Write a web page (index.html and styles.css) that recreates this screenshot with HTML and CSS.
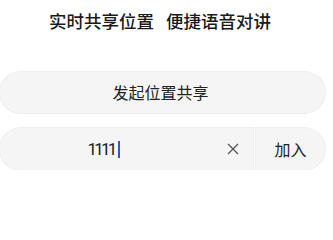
FILE: index.html
```html
<!DOCTYPE html>
<html lang="zh">
<head>
<meta charset="utf-8">
<link rel="stylesheet" href="styles.css">
</head>
<body>
<div class="page">
  <div class="title"><span>实时共享位置</span><span class="second">便捷语音对讲</span></div>
  <div class="primary">发起位置共享</div>
  <div class="join-row">
    <div class="input">
      <div class="value"><span class="digits">1111</span><span class="caret"></span></div>
      <svg class="clear" width="12" height="12" viewBox="0 0 12 12"><path d="M1 1 L11 11 M11 1 L1 11" stroke="#555" stroke-width="1.3" fill="none"/></svg>
    </div>
    <div class="join">加入</div>
  </div>
</div>
</body>
</html>
```

FILE: styles.css
```css
html, body {
  margin: 0;
  padding: 0;
  background: #ffffff;
}
.page {
  width: 325px;
  font-family: "Noto Sans CJK SC", "Noto Sans", sans-serif;
  color: #222;
}
.title {
  padding-top: 9px;
  height: 24px;
  line-height: 24px;
  font-size: 17.5px;
  font-weight: 500;
  text-align: center;
  padding-right: 5px;
  color: #1a1a1a;
}
.title .second {
  margin-left: 12px;
}
.primary {
  margin-top: 39px;
  height: 41px;
  line-height: 41px;
  border-radius: 21px;
  background: #f5f5f5;
  box-shadow: 0 0 0 1px #eeeeee;
  text-align: center;
  font-size: 16px;
  padding-right: 4px;
  color: #222;
}
.join-row {
  margin-top: 15px;
  display: flex;
  gap: 3px;
  height: 42px;
}
.input {
  width: 253px;
  display: flex;
  align-items: center;
  background: #f5f5f5;
  border-radius: 21px 0 0 21px;
  box-shadow: 0 0 0 1px #eeeeee;
  padding-right: 14px;
  box-sizing: border-box;
}
.value {
  flex: 1;
  padding-right: 20px;
  display: flex;
  justify-content: center;
  align-items: center;
}
.digits {
  font-family: Roboto, "Noto Sans", sans-serif;
  font-size: 17px;
  letter-spacing: -2.8px;
  color: #222;
}
.caret {
  display: inline-block;
  width: 2px;
  height: 17px;
  background: #3e55b3;
  margin-left: 3px;
}
.clear {
  display: block;
}
.join {
  flex: 1;
  background: #f5f5f5;
  border-radius: 0 21px 21px 0;
  box-shadow: 0 0 0 1px #eeeeee;
  display: flex;
  align-items: center;
  justify-content: center;
  font-size: 16px;
  color: #222;
}
```
